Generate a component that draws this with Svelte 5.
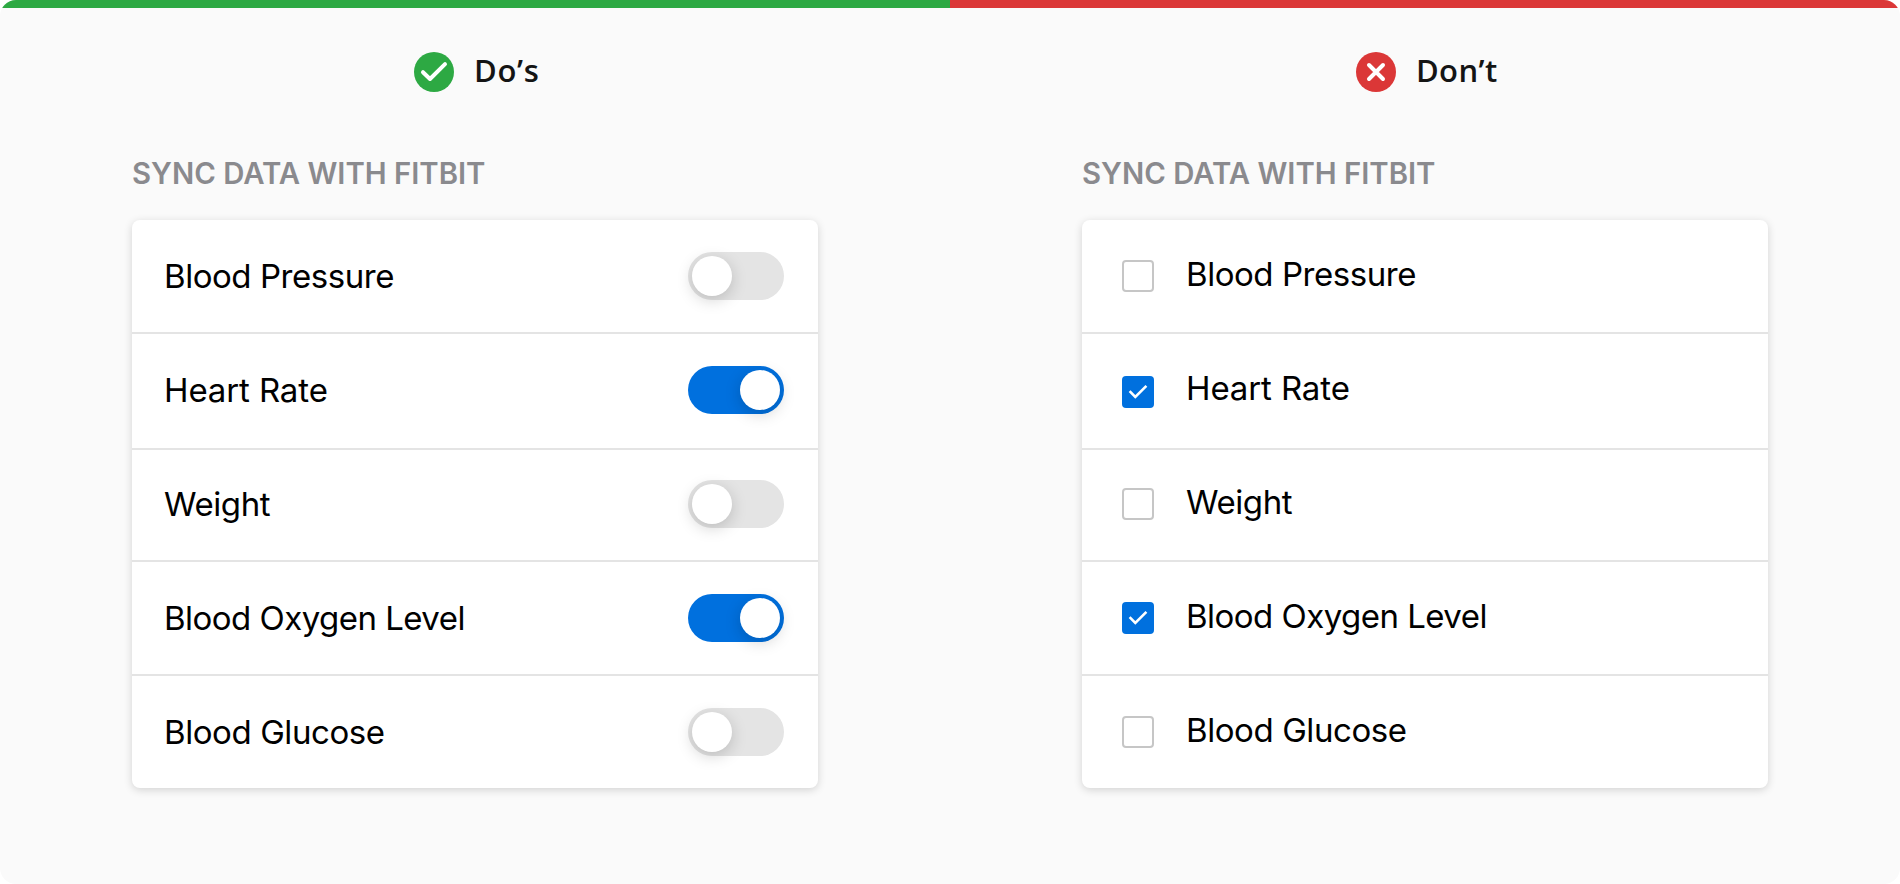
<script>
  const rows = [
    { label: 'Blood Pressure', on: false, tracking: -0.45 },
    { label: 'Heart Rate', on: true, tracking: -0.12 },
    { label: 'Weight', on: false, tracking: -0.4 },
    { label: 'Blood Oxygen Level', on: true, tracking: -0.53 },
    { label: 'Blood Glucose', on: false, tracking: -0.42 }
  ];
</script>

<main class="board">
  <section class="panel do">
    <header class="verdict">
      <svg width="40" height="40" viewBox="0 0 40 40">
        <circle cx="20" cy="20" r="20" fill="#2da943" />
        <path d="M9 20.2 16 27 31 12.2" fill="none" stroke="#fff" stroke-width="4" stroke-linecap="round" stroke-linejoin="round" />
      </svg>
      <h2>Do’s</h2>
    </header>
    <h3>SYNC DATA WITH FITBIT</h3>
    <ul class="card">
      {#each rows as row}
        <li>
          <span class="label" style:letter-spacing="{row.tracking}px">{row.label}</span>
          <span class="toggle" class:on={row.on}><span class="knob"></span></span>
        </li>
      {/each}
    </ul>
  </section>
  <section class="panel dont">
    <header class="verdict">
      <svg width="40" height="40" viewBox="0 0 40 40">
        <circle cx="20" cy="20" r="20" fill="#db3737" />
        <path d="M13 13 27 27M27 13 13 27" fill="none" stroke="#fff" stroke-width="4" stroke-linecap="round" />
      </svg>
      <h2>Don’t</h2>
    </header>
    <h3>SYNC DATA WITH FITBIT</h3>
    <ul class="card">
      {#each rows as row}
        <li>
          <span class="box" class:on={row.on}>
            {#if row.on}
              <svg width="32" height="32" viewBox="0 0 32 32">
                <path d="M7.6 15.2 13.3 20.9 24.4 9.8" fill="none" stroke="#fff" stroke-width="2.6" />
              </svg>
            {/if}
          </span>
          <span class="label" style:letter-spacing="{row.tracking}px">{row.label}</span>
        </li>
      {/each}
    </ul>
  </section>
</main>

<style>
  :global(body) {
    background: #fff;
  }
  .board {
    display: grid;
    grid-template-columns: 1fr 1fr;
    width: 1900px;
    height: 884px;
    border-radius: 16px;
    overflow: hidden;
    background: #fafafa;
    font-family: Inter, 'Liberation Sans', sans-serif;
  }
  .panel {
    box-sizing: border-box;
    border-top: 8px solid #2da943;
    padding: 44px 132px 0;
  }
  .dont {
    border-top-color: #db3737;
  }
  .verdict {
    display: flex;
    align-items: center;
    gap: 20px;
    height: 40px;
    padding-left: 282px;
  }
  .dont .verdict {
    padding-left: 274px;
  }
  h2 {
    margin: 0;
    padding-bottom: 4px;
    font: 650 31px/40px 'Open Sans', sans-serif;
    letter-spacing: 0.7px;
    color: #141414;
  }
  .dont h2 {
    letter-spacing: 0.4px;
  }
  h3 {
    margin: 62px 0 0;
    height: 66px;
    font-size: 29.3px;
    line-height: 40px;
    font-weight: 600;
    color: #8a8a8e;
    white-space: nowrap;
  }
  .card {
    box-sizing: border-box;
    width: 686px;
    height: 568px;
    margin: 0;
    padding: 0;
    list-style: none;
    border-radius: 8px;
    background: #fff;
    box-shadow: 0 2px 8px rgba(0, 0, 0, 0.16);
    display: grid;
    grid-template-rows: 114px 116px 112px 114px 112px;
  }
  li {
    box-sizing: border-box;
    display: flex;
    align-items: flex-start;
    padding: 32px 34px 0 32px;
    border-bottom: 2px solid #e4e4e4;
  }
  li:nth-child(3) {
    padding-top: 30px;
  }
  li:last-child {
    border-bottom: 0;
  }
  .label {
    flex: 1;
    font-size: 33px;
    line-height: 48px;
    color: #000;
    white-space: nowrap;
  }
  .toggle {
    box-sizing: border-box;
    display: flex;
    width: 96px;
    height: 48px;
    padding: 4px;
    border-radius: 24px;
    background: #e4e4e4;
  }
  .toggle.on {
    justify-content: flex-end;
    background: #0070de;
  }
  .knob {
    width: 40px;
    height: 40px;
    border-radius: 50%;
    background: #fff;
    box-shadow: 0 4px 16px rgba(0, 0, 0, 0.18);
  }
  .dont li {
    padding-top: 30px;
    padding-left: 40px;
    gap: 32px;
  }
  .dont li:nth-child(3) {
    padding-top: 28px;
  }
  .box {
    box-sizing: border-box;
    width: 32px;
    height: 32px;
    margin-top: 10px;
    border: 2px solid #c6c6c6;
    border-radius: 4px;
  }
  .box.on {
    border: 0;
    background: #0070de;
  }
  .dont li:nth-child(2) .box {
    margin-top: 12px;
  }
  .box svg {
    display: block;
  }
</style>
